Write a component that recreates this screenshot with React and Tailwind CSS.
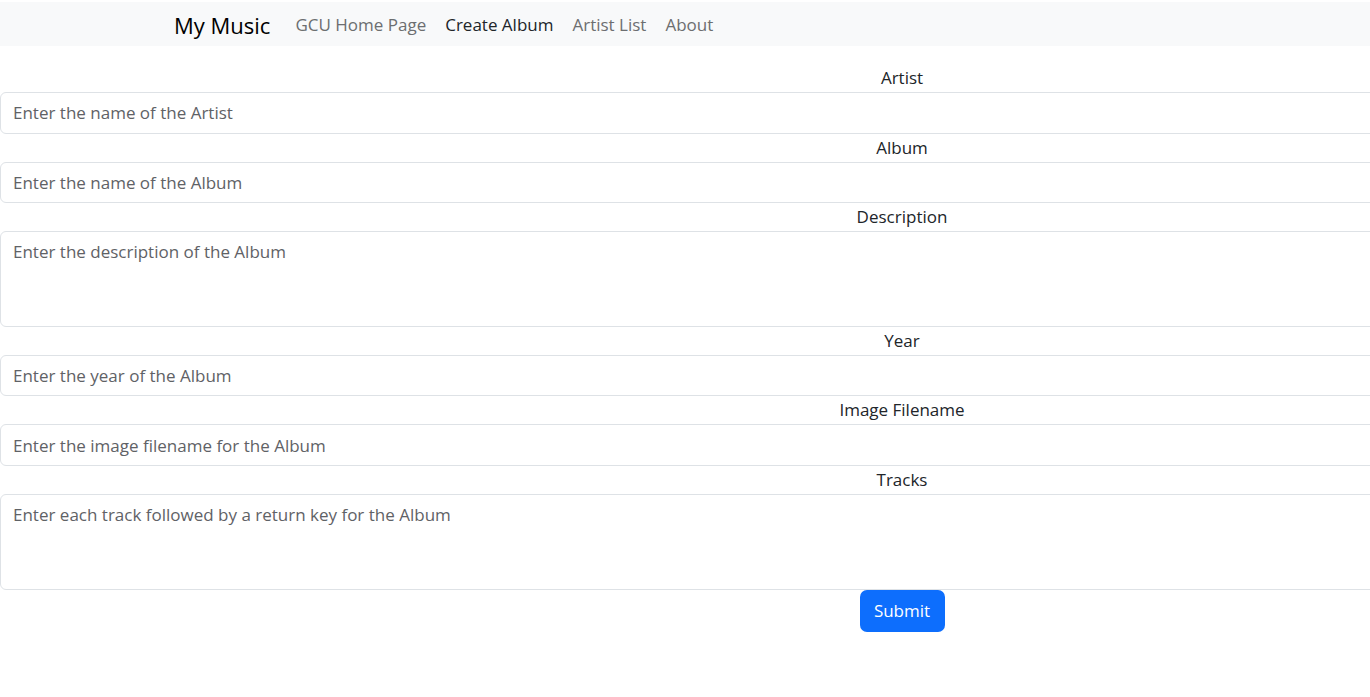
export default function App() {
  const font = { fontFamily: '"Open Sans", "Noto Sans", sans-serif' };
  const inputCls =
    "block w-[1804px] h-[41.6px] border border-[#dee2e6] rounded-[6px] px-[12px] text-[17px] text-[#212529] placeholder:text-[#5f6266] outline-none bg-white";
  const taCls =
    "block w-[1804px] h-[95.6px] border border-[#dee2e6] rounded-[6px] px-[12px] py-[7px] text-[17px] text-[#212529] placeholder:text-[#5f6266] outline-none bg-white resize-none leading-[26px]";
  const labelCls = "block w-[1804px] h-[28px] text-center text-[17px] leading-[28px] text-[#212529]";
  return (
    <div className="w-[1370px] h-[697px] overflow-hidden bg-white" style={font}>
      <div className="pt-[2px]">
        <nav className="h-[44px] bg-[#f8f9fa] flex items-center pl-[174px] pt-[2px]">
          <span className="text-[22px] text-[#000000] mr-[25px]">My Music</span>
          <div className="flex items-center gap-[19px] text-[17px]">
            <span className="text-[#6c6e70]">GCU Home Page</span>
            <span className="text-[#212529]">Create Album</span>
            <span className="text-[#6c6e70]">Artist List</span>
            <span className="text-[#6c6e70]">About</span>
          </div>
        </nav>
      </div>
      <form className="pt-[18px]">
        <label className={labelCls}>Artist</label>
        <input className={inputCls} placeholder="Enter the name of the Artist" />
        <label className={labelCls}>Album</label>
        <input className={inputCls} placeholder="Enter the name of the Album" />
        <label className={labelCls}>Description</label>
        <textarea className={taCls} placeholder="Enter the description of the Album" />
        <label className={labelCls}>Year</label>
        <input className={inputCls} placeholder="Enter the year of the Album" />
        <label className={labelCls}>Image Filename</label>
        <input className={inputCls} placeholder="Enter the image filename for the Album" />
        <label className={labelCls}>Tracks</label>
        <textarea className={taCls} placeholder="Enter each track followed by a return key for the Album" />
        <div className="w-[1804px] flex justify-center">
          <button
            type="button"
            className="h-[42px] w-[85px] bg-[#0d6efd] text-white text-[17px] rounded-[7px]"
          >
            Submit
          </button>
        </div>
      </form>
    </div>
  );
}
